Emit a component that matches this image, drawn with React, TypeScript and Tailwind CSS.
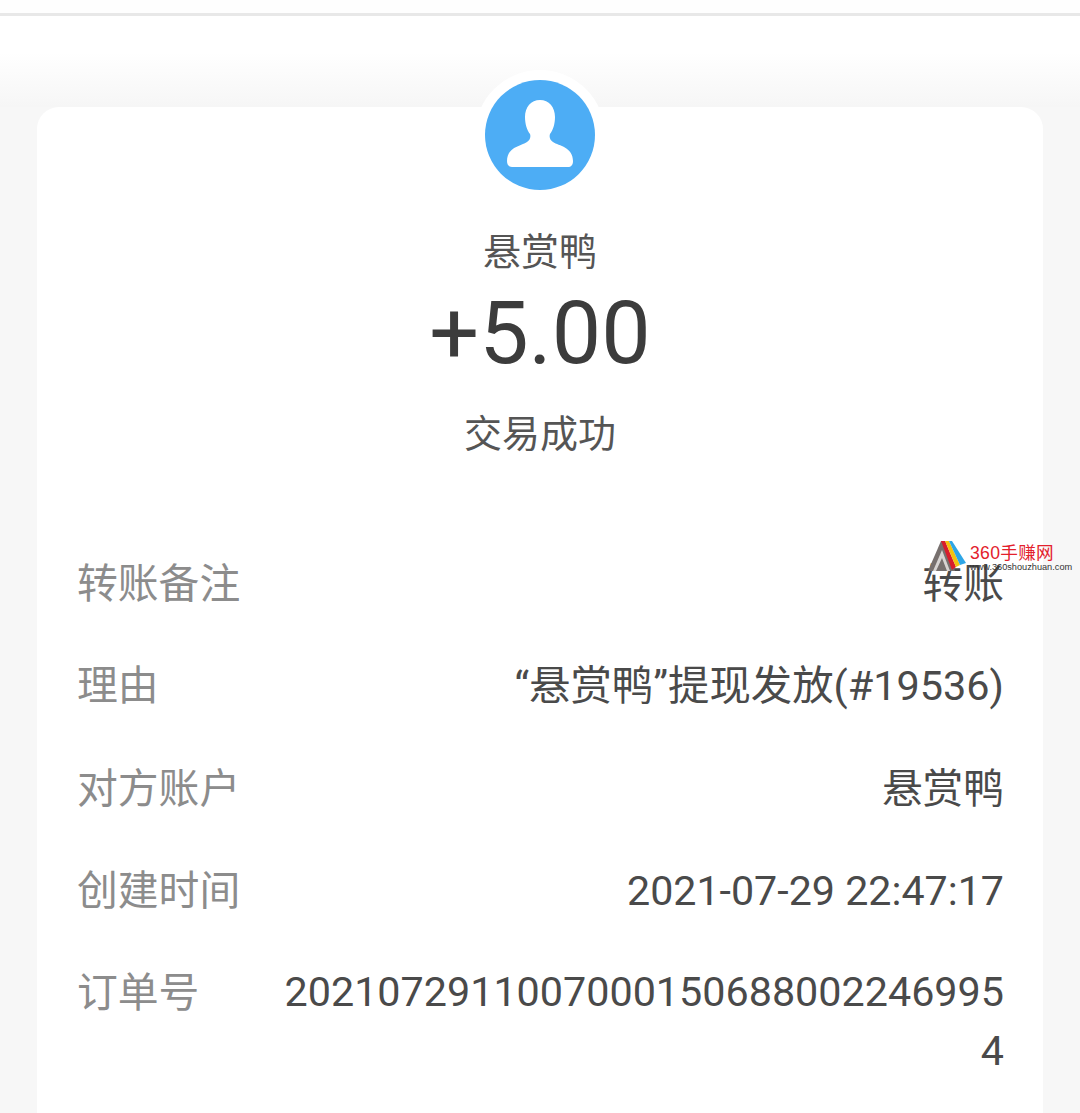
const font = "font-['Roboto','Noto_Sans_CJK_SC',sans-serif]";

const rows: { label: string; value: string; size: string }[] = [
  { label: "转账备注", value: "转账", size: "text-[40.8px] leading-[58px]" },
  { label: "理由", value: "“悬赏鸭”提现发放(#19536)", size: "text-[41.4px] leading-[58px]" },
  { label: "对方账户", value: "悬赏鸭", size: "text-[40.7px] leading-[58px]" },
  { label: "创建时间", value: "2021-07-29 22:47:17", size: "text-[41.2px] leading-[58px]" },
  { label: "订单号", value: "20210729110070001506880022469954", size: "-mt-[1px] text-[41.3px] leading-[59px]" },
];

function Avatar() {
  return (
    <div className="flex h-[130px] w-[130px] items-center justify-center rounded-full bg-white">
      <svg width="110" height="110" viewBox="0 0 110 110" aria-hidden="true">
        <circle cx="55" cy="55" r="55" fill="#4dadf5" />
        <path
          d="M55 20C46 20 40 27 40 37C40 44 42 50 45 54C46 57 45 60 42 62C36 66 22 67 22 81C22 85 24 87 27 87H83C86 87 88 85 88 81C88 67 74 66 68 62C65 60 64 57 65 54C68 50 70 44 70 37C70 27 64 20 55 20Z"
          fill="#fff"
        />
      </svg>
    </div>
  );
}

// Site badge: grey nested triangle with three coloured stripes down its right side
function Watermark() {
  return (
    <div className="absolute left-[928px] top-[540px] flex items-start">
      <svg width="38" height="31" viewBox="0 0 38 31" aria-hidden="true">
        <path d="M0 31 13 1h4l10 30z" fill="#77706e" />
        <path d="M5 31 14 10l8 21h-3l-5-13-6 13z" fill="#d8d4d2" />
        <path d="M13 1h4l11 26-4 3z" fill="#d81e2c" />
        <path d="M17 1h4l11 24-4 2z" fill="#f4c20f" />
        <path d="M21 1h3l14 22-6 2z" fill="#2ea6e6" />
      </svg>
      <div className="ml-[4px] flex flex-col pt-[3px]">
        <span className="text-[17.6px] leading-[20px] tracking-[0.3px] text-[#e3202c] font-['Liberation_Sans','Noto_Sans_CJK_SC',sans-serif]">
          360手赚网
        </span>
        <span className="text-[9.2px] leading-[9px] text-[#333] font-['Liberation_Sans',sans-serif]">
          www.360shouzhuan.com
        </span>
      </div>
    </div>
  );
}

export default function App() {
  return (
    <div className={`relative h-[1113px] w-[1080px] overflow-hidden bg-[#f7f7f7] ${font}`}>
      <div className="h-[13px] bg-[#fefefe]" />
      <div className="h-[3px] bg-[#e8e8e8]" />
      <div className="h-[91px] bg-gradient-to-b from-white from-40% to-[#f6f6f6]" />
      <div className="mx-[37px] flex h-[1100px] flex-col rounded-[22px] bg-white px-[40px]">
        <div className="-mt-[37px] flex flex-col items-center">
          <Avatar />
          <div className="mt-[24px] text-[38px] leading-[56px] text-[#555]">悬赏鸭</div>
          <div className="mt-[3px] text-[88px] leading-[100px] text-[#3c3c3c]">+5.00</div>
          <div className="mt-[23px] text-[38px] leading-[56px] text-[#555]">交易成功</div>
        </div>
        <div className="mt-[93px] flex flex-col">
          {rows.map((r) => (
            <div key={r.label} className="flex min-h-[102.25px] items-start justify-between">
              <span className="shrink-0 text-[40.8px] leading-[58px] text-[#8c8c8c]">{r.label}</span>
              <span className={`-mr-[1px] max-w-[722px] break-all text-right text-[#4a4a4a] ${r.size}`}>
                {r.value}
              </span>
            </div>
          ))}
        </div>
      </div>
      <Watermark />
    </div>
  );
}
